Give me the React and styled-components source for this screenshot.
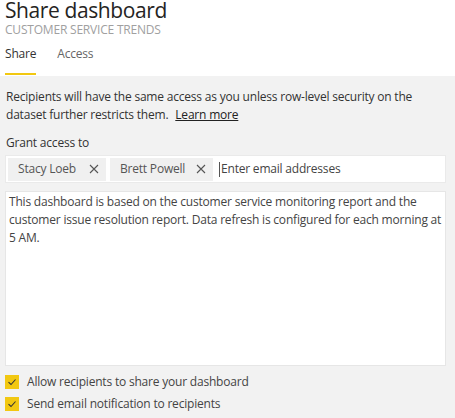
import React from 'react'
import styled, { createGlobalStyle } from 'styled-components'

const Global = createGlobalStyle`
  body {
    margin: 0;
    background: #f2f2f2;
    font-family: "Segoe UI", "Open Sans", sans-serif;
    color: #333;
    letter-spacing: -0.2px;
  }
`

const Page = styled.div`
  width: 455px;
  height: 418px;
  overflow: hidden;
  display: flex;
  flex-direction: column;
`

const Header = styled.div`
  background: #fff;
  padding: 0 5px;
  height: 76px;
  box-sizing: border-box;
`

const Title = styled.h1`
  margin: 0;
  font-size: 21px;
  line-height: 18px;
  padding-top: 1px;
  font-weight: 400;
  letter-spacing: -0.4px;
  color: #252423;
`

const Subtitle = styled.div`
  font-size: 12px;
  line-height: 14px;
  margin-top: 4px;
  color: #a0a0a0;
`

const Tabs = styled.div`
  display: flex;
  gap: 21px;
  margin-top: 9px;
`

const Tab = styled.div`
  font-size: 12px;
  line-height: 16px;
  padding-bottom: 11px;
  color: ${p => (p.$active ? '#333' : '#666')};
  border-bottom: 2px solid ${p => (p.$active ? '#f2c811' : 'transparent')};
`

const Body = styled.div`
  padding: 12px 5px 0 5px;
  font-size: 12px;
  line-height: 18px;
  width: 441px;
`

const Note = styled.p`
  margin: 0;
  padding-left: 1px;
`

const Learn = styled.a`
  color: #222;
  text-decoration: underline;
  margin-left: 4px;
`

const Label = styled.div`
  margin-top: 10px;
  padding-left: 1px;
`

const Recipients = styled.div`
  margin-top: 3px;
  background: #fff;
  height: 26px;
  display: flex;
  align-items: center;
  padding: 0 2px;
  gap: 4px;
  border: 1px solid #eaeaea;
`

const Chip = styled.div`
  height: 23px;
  display: flex;
  align-items: center;
  padding: 0 7px 0 10px;
  background: #f0f0f0;
  color: #555;
  white-space: nowrap;
  flex: none;
  width: ${p => p.$w}px;
  box-sizing: border-box;
  justify-content: space-between;
`

const EmailInput = styled.input`
  flex: 1;
  min-width: 0;
  border: none;
  outline: none;
  font: inherit;
  letter-spacing: -0.2px;
  font-size: 12px;
  padding: 0 0 0 1px;
  margin-left: 2px;
  border-left: 1px solid #555;
  height: 15px;
  &::placeholder {
    color: #444;
  }
`

const Message = styled.div`
  margin-top: 8px;
  background: #fff;
  border: 1px solid #e6e6e6;
  height: 175px;
  box-sizing: border-box;
  padding: 1px 3px;
  color: #444;
`

const Options = styled.div`
  margin-top: 7px;
  display: flex;
  flex-direction: column;
  gap: 4px;
`

const Option = styled.label`
  display: flex;
  align-items: center;
  gap: 8px;
  color: #444;
`

const Box = styled.span`
  width: 14px;
  height: 14px;
  background: #f2c811;
  display: flex;
  align-items: center;
  justify-content: center;
`

const X = () => (
  <svg width="10" height="10" viewBox="0 0 10 10">
    <path d="M1 1L9 9M9 1L1 9" stroke="#555" strokeWidth="1.1" />
  </svg>
)

const Check = () => (
  <svg width="10" height="10" viewBox="0 0 10 10">
    <path d="M1.5 5.2L4 7.5L8.5 2.5" stroke="#333" strokeWidth="1.1" fill="none" />
  </svg>
)

export default function App() {
  return (
    <Page>
      <Global />
      <Header>
        <Title>Share dashboard</Title>
        <Subtitle>CUSTOMER SERVICE TRENDS</Subtitle>
        <Tabs>
          <Tab $active>Share</Tab>
          <Tab>Access</Tab>
        </Tabs>
      </Header>
      <Body>
        <Note>
          Recipients will have the same access as you unless row-level security on the dataset further
          restricts them. <Learn>Learn more</Learn>
        </Note>
        <Label>Grant access to</Label>
        <Recipients>
          <Chip $w={98}>Stacy Loeb <X /></Chip>
          <Chip $w={103}>Brett Powell <X /></Chip>
          <EmailInput placeholder="Enter email addresses" />
        </Recipients>
        <Message>
          This dashboard is based on the customer service monitoring report and the customer issue
          resolution report. Data refresh is configured for each morning at 5 AM.
        </Message>
        <Options>
          <Option><Box><Check /></Box>Allow recipients to share your dashboard</Option>
          <Option><Box><Check /></Box>Send email notification to recipients</Option>
        </Options>
      </Body>
    </Page>
  )
}
